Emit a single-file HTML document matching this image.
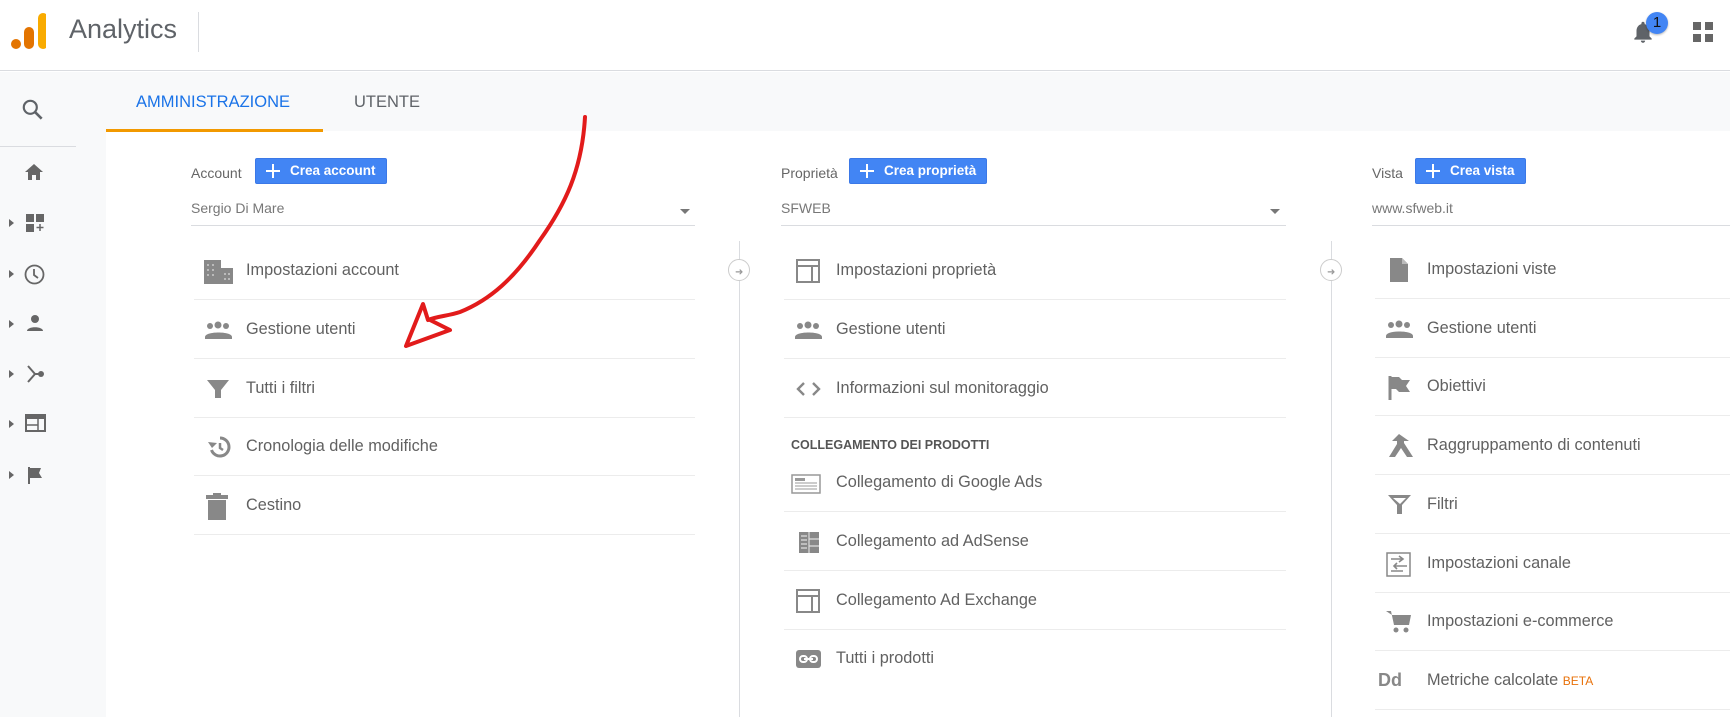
<!DOCTYPE html>
<html><head><meta charset="utf-8"><style>
*{margin:0;padding:0;box-sizing:border-box}
body{width:1730px;height:717px;overflow:hidden;background:#fff;font-family:"Liberation Sans",sans-serif;color:#5f6368;position:relative}
.a{position:absolute}
.hdr{left:0;top:0;width:1730px;height:71px;background:#fff;border-bottom:1px solid #dadce0}
.band{left:0;top:72px;width:1730px;height:59px;background:#f8f9fa}
.side{left:0;top:72px;width:106px;height:645px;background:#f8f9fa}
.lbl{font-size:14px;color:#666}
.btn{background:#4285f4;border:1px solid #3b78e7;border-radius:2px;color:#fff;font-weight:bold;font-size:13.5px;height:26px;line-height:24px;padding:0 10px 0 34px}
.btn:before{content:"";position:absolute;left:10px;top:5px;width:14px;height:14px;background:linear-gradient(#fff,#fff) center/14px 2px no-repeat,linear-gradient(#fff,#fff) center/2px 14px no-repeat}
.dd{font-size:14px;color:#777;height:33px;border-bottom:1px solid #dadce0}
.row{height:59px;border-bottom:1px solid #ececec;font-size:16.3px;line-height:58px;color:#616161}
.row span{position:absolute;left:52px}
.row svg{position:absolute;left:10px;top:17px}
.vl{width:1px;background:#dadce0;top:241px;height:476px}
.circ{width:22px;height:22px;border:1.5px solid #ccc;border-radius:50%;background:#fff;top:259px}
.tri{width:0;height:0;border-left:5px solid #666;border-top:4px solid transparent;border-bottom:4px solid transparent;left:9px}
</style></head><body>
<div class="a hdr"></div>
<svg class="a" style="left:10px;top:12px" width="36" height="40"><circle cx="6" cy="32" r="5" fill="#e37400"/><rect x="14" y="15" width="10" height="22" rx="5" fill="#e37400"/><rect x="28" y="1" width="10" height="36" rx="5" fill="#f9ab00"/></svg>
<div class="a" style="left:69px;top:14px;font-size:27px;color:#5f6368">Analytics</div>
<div class="a" style="left:198px;top:12px;width:1px;height:40px;background:#dadce0"></div>
<svg class="a" style="left:1630px;top:18px" width="26" height="28" viewBox="0 0 24 24"><path fill="#5f6368" d="M12 22c1.1 0 2-.9 2-2h-4c0 1.1.9 2 2 2zm6-6v-5c0-3.070-1.640-5.640-4.500-6.320V4c0-.83-.67-1.5-1.5-1.5s-1.5.67-1.5 1.5v.68C7.63 5.36 6 7.92 6 11v5l-2 2v1h16v-1l-2-2z"/></svg>
<div class="a" style="left:1646px;top:12px;width:22px;height:22px;border-radius:50%;background:#4285f4;color:#111;font-size:15px;text-align:center;line-height:22px;box-shadow:0 1px 2px rgba(0,0,0,.3)">1</div>
<svg class="a" style="left:1693px;top:22px" width="20" height="20"><rect x="0" y="0" width="8" height="8" fill="#666"/><rect x="12" y="0" width="8" height="8" fill="#666"/><rect x="0" y="12" width="8" height="8" fill="#666"/><rect x="12" y="12" width="8" height="8" fill="#666"/></svg>
<div class="a band"></div>
<div class="a side"></div>
<svg class="a" style="left:20px;top:97px" width="26" height="26" viewBox="0 0 24 24"><circle cx="9.5" cy="9.5" r="6" fill="none" stroke="#5f6368" stroke-width="2"/><path d="M14 14l6 6" stroke="#5f6368" stroke-width="2.4"/></svg>
<div class="a" style="left:0;top:146px;width:76px;height:1px;background:#dadce0"></div>
<svg class="a" style="left:24px;top:163px" width="20" height="18" viewBox="0 0 20 18"><path d="M10 1L1 9h3v8h4v-5h4v5h4V9h3z" fill="#666"/></svg>
<div class="a tri" style="top:219px"></div>
<svg class="a" style="left:25px;top:213px" width="20" height="20"><rect x="1" y="1" width="8" height="8" fill="#666"/><rect x="11" y="1" width="8" height="8" fill="#666"/><rect x="1" y="11" width="8" height="8" fill="#666"/><path d="M15 11v7M11.5 14.5h7" stroke="#666" stroke-width="1.5"/></svg>
<div class="a tri" style="top:270px"></div>
<svg class="a" style="left:24px;top:264px" width="21" height="21"><circle cx="10.5" cy="10.5" r="9" fill="none" stroke="#666" stroke-width="1.8"/><path d="M10 5v6l4 3" fill="none" stroke="#666" stroke-width="1.8"/></svg>
<div class="a tri" style="top:320px"></div>
<svg class="a" style="left:26px;top:314px" width="18" height="18"><circle cx="9" cy="5" r="4" fill="#666"/><path d="M1 17c0-5 16-5 16 0z" fill="#666"/></svg>
<div class="a tri" style="top:370px"></div>
<svg class="a" style="left:25px;top:364px" width="20" height="20"><path d="M3 2l7 8-7 8" fill="none" stroke="#666" stroke-width="2"/><path d="M10 10h5" stroke="#666" stroke-width="2"/><circle cx="16" cy="10" r="3" fill="#666"/></svg>
<div class="a tri" style="top:420px"></div>
<svg class="a" style="left:25px;top:414px" width="21" height="18"><rect x="1" y="1" width="19" height="16" fill="none" stroke="#666" stroke-width="2"/><rect x="1" y="1" width="19" height="4" fill="#666"/><path d="M1 11h12M13 5v12" stroke="#666" stroke-width="1.5"/></svg>
<div class="a tri" style="top:471px"></div>
<svg class="a" style="left:27px;top:466px" width="18" height="18"><path d="M2 1v17" stroke="#666" stroke-width="2"/><path d="M2 2h12l-2 5 3 5H2z" fill="#666"/></svg>

<div class="a" style="left:136px;top:93px;font-size:16.5px;color:#1a73e8">AMMINISTRAZIONE</div>
<div class="a" style="left:354px;top:93px;font-size:16.5px;color:#5f6368">UTENTE</div>
<div class="a" style="left:106px;top:129px;width:217px;height:3px;background:#f29900"></div>

<!-- col1 -->
<div class="a lbl" style="left:191px;top:165px">Account</div>
<div class="a btn" style="left:255px;top:158px">Crea account</div>
<div class="a dd" style="left:191px;top:193px;width:504px;padding-top:7px">Sergio Di Mare</div>
<div class="a" style="left:680px;top:209px;border-left:5px solid transparent;border-right:5px solid transparent;border-top:5px solid #777"></div>
<div class="a" style="left:194px;top:241px;width:501px">
<div class="row a" style="top:0;width:501px"><svg width="30" height="26"><rect x="0" y="2" width="17" height="24" fill="#888"/><rect x="17" y="10" width="12" height="16" fill="#888"/><g fill="#bbb"><rect x="3" y="6" width="2" height="2"/><rect x="8" y="6" width="2" height="2"/><rect x="3" y="11" width="2" height="2"/><rect x="8" y="11" width="2" height="2"/><rect x="3" y="16" width="2" height="2"/><rect x="8" y="16" width="2" height="2"/><rect x="20" y="15" width="2" height="2"/><rect x="24" y="15" width="2" height="2"/><rect x="20" y="20" width="2" height="2"/><rect x="24" y="20" width="2" height="2"/></g></svg><span>Impostazioni account</span></div>
<div class="row a" style="top:59px;width:501px"><svg width="30" height="26"><g fill="#888"><circle cx="6" cy="9" r="3"/><circle cx="14" cy="8" r="3.5"/><circle cx="22" cy="9" r="3"/><path d="M1 20c0-6 27-6 27 0v2H1z"/></g></svg><span>Gestione utenti</span></div>
<div class="row a" style="top:117.5px;width:501px"><svg width="30" height="26"><path d="M3 4h22l-8 10v8h-6v-8z" fill="#888"/></svg><span>Tutti i filtri</span></div>
<div class="row a" style="top:176px;width:501px"><svg width="30" height="26" viewBox="-3 -1 30 26"><path d="M13 3a9 9 0 1 1-8.5 12" fill="none" stroke="#888" stroke-width="3"/><path d="M1 7l4 6 5-5z" fill="#888"/><path d="M13 8v5l3 2" fill="none" stroke="#888" stroke-width="2.5"/></svg><span>Cronologia delle modifiche</span></div>
<div class="row a" style="top:234.5px;width:501px"><svg width="30" height="28"><rect x="2" y="2" width="22" height="4" fill="#888"/><rect x="9" y="0" width="8" height="3" fill="#888"/><rect x="4" y="7" width="18" height="20" fill="#888"/></svg><span>Cestino</span></div>
</div>

<!-- connectors -->
<div class="a vl" style="left:739px"></div>
<div class="a circ" style="left:728px"></div>
<div class="a" style="left:735px;top:267px;color:#999;font-size:10px">➜</div>
<div class="a vl" style="left:1331px"></div>
<div class="a circ" style="left:1320px"></div>
<div class="a" style="left:1327px;top:267px;color:#999;font-size:10px">➜</div>

<!-- col2 -->
<div class="a lbl" style="left:781px;top:165px">Proprietà</div>
<div class="a btn" style="left:849px;top:158px">Crea proprietà</div>
<div class="a dd" style="left:781px;top:193px;width:505px;padding-top:7px">SFWEB</div>
<div class="a" style="left:1270px;top:209px;border-left:5px solid transparent;border-right:5px solid transparent;border-top:5px solid #777"></div>
<div class="a" style="left:784px;top:241px;width:502px">
<div class="row a" style="top:0;width:502px"><svg width="30" height="26"><rect x="3" y="2" width="22" height="22" fill="none" stroke="#888" stroke-width="2"/><path d="M3 8h22M18 8v16" stroke="#888" stroke-width="2"/></svg><span>Impostazioni proprietà</span></div>
<div class="row a" style="top:59px;width:502px"><svg width="30" height="26"><g fill="#888"><circle cx="6" cy="9" r="3"/><circle cx="14" cy="8" r="3.5"/><circle cx="22" cy="9" r="3"/><path d="M1 20c0-6 27-6 27 0v2H1z"/></g></svg><span>Gestione utenti</span></div>
<div class="row a" style="top:117.5px;width:502px"><svg width="30" height="26"><path d="M10 7l-6 6 6 6M19 7l6 6-6 6" fill="none" stroke="#888" stroke-width="2.4"/></svg><span>Informazioni sul monitoraggio</span></div>
</div>
<div class="a" style="left:791px;top:438px;font-size:12.5px;font-weight:bold;color:#555">COLLEGAMENTO DEI PRODOTTI</div>
<div class="a" style="left:784px;top:453px;width:502px">
<div class="row a" style="top:0;width:502px"><svg width="32" height="26" style="left:7px"><rect x="1" y="5" width="28" height="18" fill="none" stroke="#999" stroke-width="1.5"/><rect x="4" y="8" width="10" height="3" fill="#999"/><path d="M4 13h22M4 16h22M4 19h22" stroke="#999"/></svg><span>Collegamento di Google Ads</span></div>
<div class="row a" style="top:59px;width:502px"><svg width="30" height="26"><rect x="5" y="3" width="20" height="21" fill="#888"/><path d="M15 3v21M15 10h10M15 17h10M7 7h6M7 11h6M7 15h6M7 19h6" stroke="#ddd" stroke-width="1.2"/></svg><span>Collegamento ad AdSense</span></div>
<div class="row a" style="top:117.5px;width:502px"><svg width="30" height="26"><rect x="3" y="2" width="22" height="22" fill="none" stroke="#888" stroke-width="2"/><path d="M3 8h22M18 8v16" stroke="#888" stroke-width="2"/></svg><span>Collegamento Ad Exchange</span></div>
<div class="row a" style="top:176px;width:502px;border-bottom:none"><svg width="30" height="26"><rect x="2" y="4" width="25" height="18" rx="3" fill="#888"/><path d="M10 13h9" stroke="#fff" stroke-width="2"/><rect x="6" y="10" width="7" height="6" rx="3" fill="none" stroke="#fff" stroke-width="2"/><rect x="16" y="10" width="7" height="6" rx="3" fill="none" stroke="#fff" stroke-width="2"/></svg><span>Tutti i prodotti</span></div>
</div>

<!-- col3 -->
<div class="a lbl" style="left:1372px;top:165px">Vista</div>
<div class="a btn" style="left:1415px;top:158px">Crea vista</div>
<div class="a dd" style="left:1372px;top:193px;width:358px;padding-top:7px">www.sfweb.it</div>
<div class="a" style="left:1375px;top:240px;width:355px">
<div class="row a" style="top:0;width:355px"><svg width="30" height="26"><path d="M5 1h12l6 6v18H5z" fill="#888"/><path d="M17 1v6h6" fill="#bbb"/></svg><span>Impostazioni viste</span></div>
<div class="row a" style="top:58.7px;width:355px"><svg width="30" height="26"><g fill="#888"><circle cx="6" cy="9" r="3"/><circle cx="14" cy="8" r="3.5"/><circle cx="22" cy="9" r="3"/><path d="M1 20c0-6 27-6 27 0v2H1z"/></g></svg><span>Gestione utenti</span></div>
<div class="row a" style="top:117.4px;width:355px"><svg width="30" height="26"><path d="M5 2v24" stroke="#888" stroke-width="3"/><path d="M5 3h9l3 3h8l-4 6 4 6H14l-3-3H5z" fill="#888"/></svg><span>Obiettivi</span></div>
<div class="row a" style="top:176.1px;width:355px"><svg width="30" height="26"><path d="M14 1l-7 7h5v3l-8 13h6l6-9 6 9h6l-9-14V8h5z" fill="#888"/></svg><span>Raggruppamento di contenuti</span></div>
<div class="row a" style="top:234.8px;width:355px"><svg width="30" height="26"><path d="M3 3h23l-9 10v9h-5v-9z" fill="#888"/><path d="M8 6h13l-6 6z" fill="#fff"/></svg><span>Filtri</span></div>
<div class="row a" style="top:293.5px;width:355px"><svg width="30" height="26"><rect x="2" y="2" width="23" height="23" fill="none" stroke="#888" stroke-width="1.5"/><path d="M6 8h12M14 5l4 3-4 3M22 15H10M12 12l-3 3 3 3M6 20h12" stroke="#888" stroke-width="1.6" fill="none"/></svg><span>Impostazioni canale</span></div>
<div class="row a" style="top:352.2px;width:355px"><svg width="30" height="26"><path d="M1 2h5l3 14h15l2-10H7" fill="#888"/><circle cx="11" cy="21" r="2.5" fill="#888"/><circle cx="21" cy="21" r="2.5" fill="#888"/></svg><span>Impostazioni e-commerce</span></div>
<div class="row a" style="top:410.9px;width:355px"><b style="position:absolute;left:3px;font-size:18px;color:#888">Dd</b><span>Metriche calcolate <small style="font-size:12px;color:#e8710a">BETA</small></span></div>
</div>

<!-- red arrow -->
<svg class="a" style="left:0;top:0" width="1730" height="717"><path d="M585 117C582 170 565 205 540 240C515 278 490 300 460 312C448 316 438 316 428 320" fill="none" stroke="#e21b1b" stroke-width="4" stroke-linecap="round"/><path d="M428 320L423 304L406 346L450 330L430 320" fill="none" stroke="#e21b1b" stroke-width="4" stroke-linejoin="round"/></svg>
</body></html>
